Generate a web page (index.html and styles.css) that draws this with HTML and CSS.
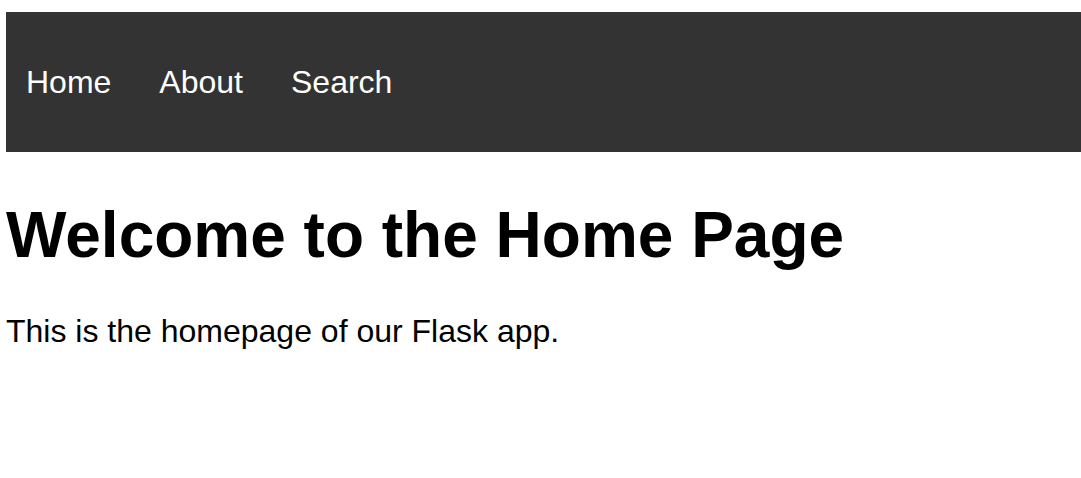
FILE: index.html
```html
<!DOCTYPE html>
<html lang="en">
<head>
<meta charset="utf-8">
<title>Home</title>
<link rel="stylesheet" href="styles.css">
</head>
<body>
<nav class="navbar">
<a href="#" class="nav-link">Home</a>
<a href="#" class="nav-link">About</a>
<a href="#" class="nav-link">Search</a>
</nav>
<h1 class="title">Welcome to the Home Page</h1>
<p class="intro">This is the homepage of our Flask app.</p>
</body>
</html>
```
FILE: styles.css
```css
html, body {
  background: #ffffff;
}
body {
  margin: 12px 0 0 6px;
  font-family: "Liberation Sans", Arial, sans-serif;
  font-size: 32px;
  color: #000000;
}
.navbar {
  background: #333333;
  height: 140px;
  display: flex;
  align-items: center;
  padding: 0 0 0 20px;
  gap: 48px;
}
.nav-link {
  color: #ffffff;
  text-decoration: none;
  font-size: 32px;
}
.title {
  font-size: 64px;
  font-weight: bold;
  margin: 46px 0 41px;
  line-height: normal;
}
.intro {
  margin: 0;
  font-size: 32px;
}
```
